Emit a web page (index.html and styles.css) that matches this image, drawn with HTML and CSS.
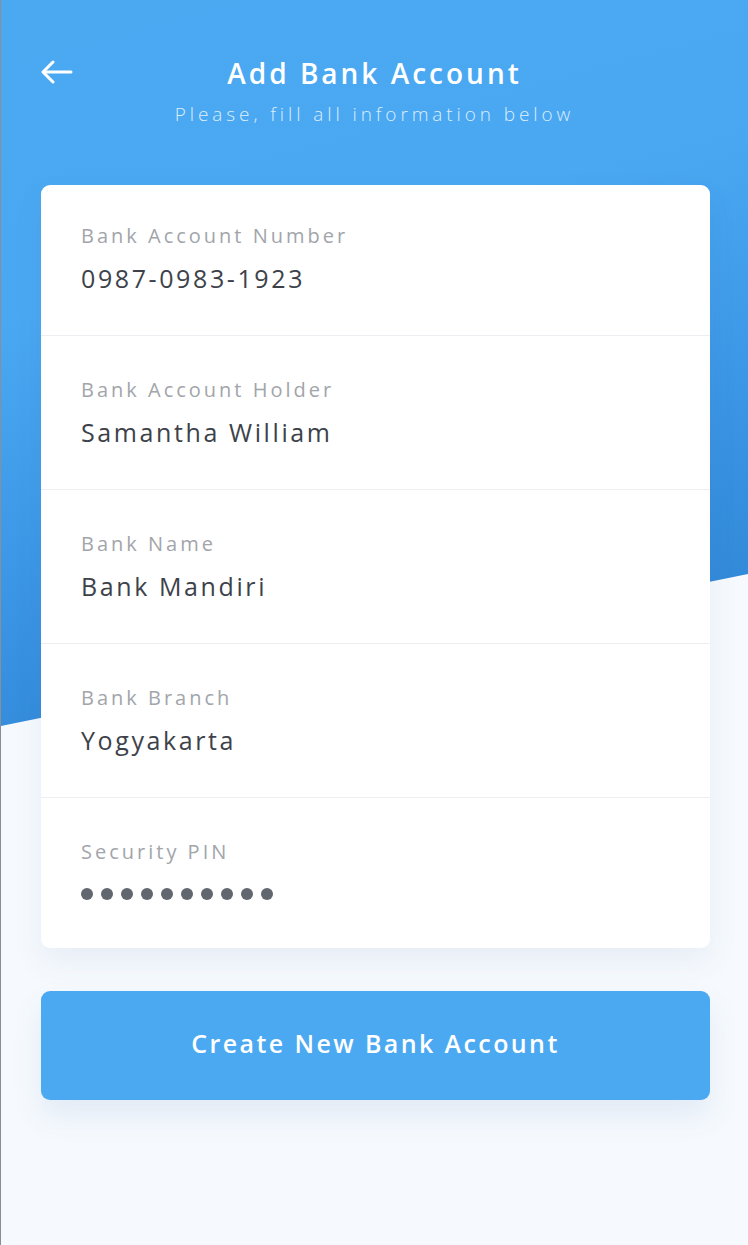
FILE: index.html
```html
<!DOCTYPE html>
<html>
<head>
<meta charset="utf-8">
<link rel="stylesheet" href="styles.css">
</head>
<body>
<div class="page">
  <div class="bg-shape"></div>
  <header class="header">
    <div class="back">
      <svg width="32" height="24" viewBox="0 0 32 24" fill="none" stroke="#fff" stroke-width="3" stroke-linecap="round" stroke-linejoin="round">
        <path d="M30 12H3"/>
        <path d="M12 2L2 12l10 10"/>
      </svg>
    </div>
    <div class="titles">
      <h1 class="title">Add Bank Account</h1>
      <p class="subtitle">Please, fill all information below</p>
    </div>
    <div></div>
  </header>

  <section class="card">
    <div class="row row-first">
      <div class="label">Bank Account Number</div>
      <div class="value">0987-0983-1923</div>
    </div>
    <div class="row">
      <div class="label">Bank Account Holder</div>
      <div class="value">Samantha William</div>
    </div>
    <div class="row">
      <div class="label">Bank Name</div>
      <div class="value">Bank Mandiri</div>
    </div>
    <div class="row">
      <div class="label">Bank Branch</div>
      <div class="value">Yogyakarta</div>
    </div>
    <div class="row row-last">
      <div class="label">Security PIN</div>
      <div class="value dots">
        <span></span><span></span><span></span><span></span><span></span>
        <span></span><span></span><span></span><span></span><span></span>
      </div>
    </div>
  </section>

  <button class="cta">Create New Bank Account</button>
</div>
</body>
</html>
```

FILE: styles.css
```css
* { box-sizing: border-box; }
html, body { margin: 0; padding: 0; }
body {
  font-family: "Open Sans", "Lato", sans-serif;
  background: #f6fafe;
}
.page {
  position: relative;
  width: 748px;
  height: 1245px;
  overflow: hidden;
  background: #f6fafe;
  border-left: 1px solid #8a8e96;
}
.bg-shape {
  position: absolute;
  left: 0; top: 0;
  width: 100%;
  height: 726px;
  background: linear-gradient(165deg, #4ba9f2 0%, #4aa8f2 35%, #3c97e6 62%, #2c80d0 100%);
  clip-path: polygon(0 0, 100% 0, 100% 574px, 0 726px);
  z-index: 0;
}
.header {
  position: relative;
  z-index: 1;
  display: grid;
  grid-template-columns: 1fr auto 1fr;
  align-items: start;
  padding: 53px 40px 0 40px;
  height: 185px;
}
.back {
  padding-top: 7px;
  display: flex;
}
.titles { text-align: center; }
.title {
  margin: 0;
  color: #fff;
  font-size: 28px;
  font-weight: 600;
  letter-spacing: 3px;
  line-height: 40px;
}
.subtitle {
  margin: 8px 0 0;
  color: rgba(255,255,255,0.82);
  font-size: 19px;
  font-weight: 300;
  letter-spacing: 3.9px;
  line-height: 26px;
}
.card {
  position: relative;
  z-index: 1;
  margin-left: 40px;
  width: 669px;
  background: #fff;
  border-radius: 9px;
  box-shadow: 0 14px 30px rgba(60, 90, 150, 0.08);
}
.row {
  padding: 42px 40px 42px;
  border-top: 1px solid #eceef1;
}
.row-first { border-top: none; padding-top: 39px; }
.row-last { padding-bottom: 39px; }
.label {
  color: #a2a5aa;
  font-size: 20px;
  letter-spacing: 3px;
  line-height: 24px;
}
.value {
  margin-top: 15px;
  color: #3d424a;
  font-size: 25px;
  letter-spacing: 2.6px;
  line-height: 30px;
}
.dots {
  display: flex;
  align-items: center;
  gap: 8px;
  height: 30px;
}
.dots span {
  width: 12px;
  height: 12px;
  border-radius: 50%;
  background: #62666e;
}
.cta {
  position: relative;
  z-index: 1;
  display: block;
  margin: 43px 0 0 40px;
  padding: 0 0 5px;
  width: 669px;
  height: 109px;
  border: none;
  border-radius: 9px;
  background: #4ba9f2;
  color: #fff;
  font-family: "Open Sans", "Lato", sans-serif;
  font-size: 25px;
  font-weight: 600;
  letter-spacing: 2.4px;
  box-shadow: 0 16px 30px rgba(60, 100, 170, 0.10);
}
```
